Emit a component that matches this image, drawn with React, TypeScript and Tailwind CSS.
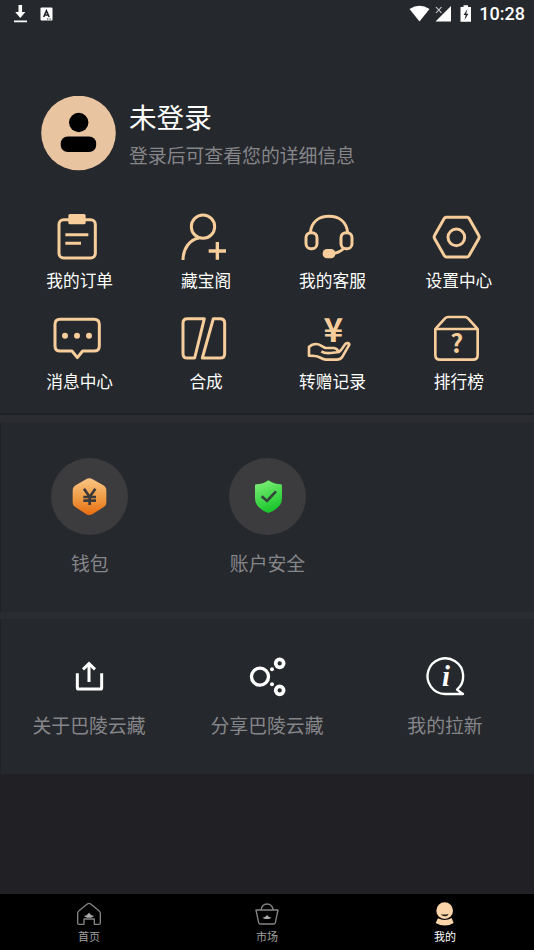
import React from "react";

const GOLD = "#f6cd9b";

type Item = { label: string; icon: React.ReactNode };

function GridIcon({ box, children }: { box: string; children: React.ReactNode }) {
  return (
    <svg className="h-[54px] w-[60px] overflow-visible" viewBox={box} fill="none" stroke={GOLD} strokeWidth={9} strokeLinejoin="round">
      {children}
    </svg>
  );
}

const menu: Item[] = [
  {
    label: "我的订单",
    icon: (
      <GridIcon box="59 15 180 162">
        <rect x="86" y="44" width="109" height="115" rx="14" />
        <rect x="114" y="27" width="52" height="31" rx="5" fill={GOLD} stroke="none" />
        <path d="M105 89h69M105 115h47" />
      </GridIcon>
    ),
  },
  {
    label: "藏宝阁",
    icon: (
      <GridIcon box="438 15 180 162">
        <circle cx="519" cy="65" r="35" />
        <path d="M507 99C480 104 460 128 459 165" />
        <path d="M536 138h52M562 111v53" strokeWidth="10" />
      </GridIcon>
    ),
  },
  {
    label: "我的客服",
    icon: (
      <GridIcon box="37 15 180 162">
        <path d="M62 82C66 50 88 34 118 34s52 16 56 48M162 130c-6 8-14 11-28 15" />
        <rect x="49" y="83" width="33" height="48" rx="15" />
        <rect x="154" y="83" width="33" height="48" rx="15" />
        <rect x="99" y="132" width="38" height="28" rx="13" fill={GOLD} stroke="none" />
      </GridIcon>
    ),
  },
  {
    label: "设置中心",
    icon: (
      <GridIcon box="416 15 180 162">
        <path d="M467 37h64q3 0 5 3l29 51q3 5 0 10l-29 51q-2 4-5 4h-64q-3 0-5-4l-29-51q-3-5 0-10l29-51q2-3 5-3Z" />
        <circle cx="498" cy="97" r="25" />
      </GridIcon>
    ),
  },
  {
    label: "消息中心",
    icon: (
      <GridIcon box="59 18 180 162">
        <path d="M89 43h102q16 0 16 15v64q0 16-16 16h-34l-16 20-16-20H89q-15 0-15-16V58q0-15 15-15Z" />
        <g fill={GOLD} stroke="none">
          <circle cx="104" cy="92" r="9" />
          <circle cx="140" cy="92" r="9" />
          <circle cx="176" cy="92" r="9" />
        </g>
      </GridIcon>
    ),
  },
  {
    label: "合成",
    icon: (
      <GridIcon box="438 18 180 162">
        <path d="M472 41h51l-29 118h-22q-13 0-13-13V54q0-13 13-13ZM550 41h20q14 0 14 13v92q0 13-14 13h-53Z" />
      </GridIcon>
    ),
  },
  {
    label: "转赠记录",
    icon: (
      <GridIcon box="37 18 180 162">
        <text x="131" y="110" textAnchor="middle" fill={GOLD} stroke="none" fontSize="100" fontWeight="700">¥</text>
        <path d="M95 139q10 7 28 5l25-3C160 132 163 118 170 115q9-2 9 4l-22 38q-5 7-16 7H109c-14-1-20-11-33-11l-18-1V126q8-9 22-9 8 0 18 7l9 5h26q12 2 12 12" strokeWidth="8" />
      </GridIcon>
    ),
  },
  {
    label: "排行榜",
    icon: (
      <GridIcon box="416 18 180 162">
        <path d="M435 72h127v78q0 14-14 14h-99q-14 0-14-14ZM436 71l28-31q4-4 9-4h51q5 0 9 4l28 31" strokeWidth="8" />
        <text x="499" y="144" textAnchor="middle" fill={GOLD} stroke="none" fontSize="76" fontWeight="700">?</text>
      </GridIcon>
    ),
  },
];

const assets: Item[] = [
  {
    label: "钱包",
    icon: (
      <svg className="size-[77px]" viewBox="0 0 231 231">
        <defs>
          <linearGradient id="wallet" x1="0" y1="0" x2="0" y2="1">
            <stop stopColor="#fac584" />
            <stop offset=".55" stopColor="#ee9a43" />
            <stop offset="1" stopColor="#ea6c10" />
          </linearGradient>
        </defs>
        <path d="M105 64q10-6 20 0l32 18q9 5 9 16v34q0 11-9 16l-32 20q-10 6-20 0l-31-20q-9-5-9-16v-34q0-11 9-16Z" fill="url(#wallet)" />
        <path d="M99 92l17 25 17-25M116 117v24M97 117h38M97 128h38" fill="none" stroke="#3b3a3b" strokeWidth="8" />
      </svg>
    ),
  },
  {
    label: "账户安全",
    icon: (
      <svg className="size-[77px]" viewBox="0 0 231 231">
        <defs>
          <linearGradient id="shield" x1="0" y1="0" x2=".35" y2="1">
            <stop stopColor="#85f27b" />
            <stop offset="1" stopColor="#1cc72e" />
          </linearGradient>
        </defs>
        <path d="M118 67q18 12 37 12q4 0 4 4v38q0 29-41 44q-40-15-40-44V83q0-4 4-4q20 0 36-12Z" fill="url(#shield)" />
        <path d="M98 115l16 14 27-29" fill="none" stroke="#34443a" strokeWidth="8" />
      </svg>
    ),
  },
];

const links: Item[] = [
  {
    label: "关于巴陵云藏",
    icon: (
      <svg className="size-[42px]" viewBox="204 47 126 126" fill="none" stroke="#fff" strokeWidth="9">
        <path d="M232 99v43q0 4 4 4h65q4 0 4-4V99M267 125V72" />
        <path d="M249 87l18-17 18 17" />
      </svg>
    ),
  },
  {
    label: "分享巴陵云藏",
    icon: (
      <svg className="size-[42px]" viewBox="48 47 126 126" fill="none" stroke="#fff">
        <circle cx="90" cy="109" r="25.500" strokeWidth="10" />
        <circle cx="149" cy="69" r="12" strokeWidth="11" />
        <circle cx="149" cy="150" r="12" strokeWidth="11" />
        <g fill="#fff" stroke="none">
          <circle cx="126" cy="87" r="6" />
          <circle cx="126" cy="132" r="6" />
        </g>
      </svg>
    ),
  },
  {
    label: "我的拉新",
    icon: (
      <svg className="size-[42px] overflow-visible" viewBox="582 47 126 126" fill="none" stroke="#fff" strokeWidth="7" strokeLinejoin="round">
        <path d="M699 161h-54a53.500 53.500 0 1 1 36-13Z" />
        <text x="648" y="137" textAnchor="middle" fill="#fff" stroke="none" fontSize="86" fontStyle="italic" fontWeight="700" style={{ fontFamily: '"Liberation Serif", serif' }}>i</text>
      </svg>
    ),
  },
];

function StatusBar() {
  return (
    <div className="flex h-7 items-center justify-between pr-[9px] pl-[13px]">
      <div className="flex items-center gap-3">
        <svg className="h-[18px] w-[15px]" viewBox="0 0 15 18" fill="#fff">
          <path d="M5.500 0h3.600v7h3.300l-5.100 6-5.100-6h3.300ZM1 15.500h13v1.800H1Z" />
        </svg>
        <svg className="h-[14px] w-[13px]" viewBox="0 0 13 14">
          <rect x=".5" y=".5" width="12" height="13" rx="1" fill="#fff" />
          <path d="M3.700 10L6.400 3.800 9.200 10M4.600 8h3.800" fill="none" stroke="#25282c" strokeWidth="1.600" />
          <path d="M7 12h4" stroke="#25282c" strokeDasharray="1 .6" />
        </svg>
      </div>
      <div className="flex items-center">
        <svg className="h-[18px] w-[64px]" viewBox="409 4 64 18" fill="#fff">
          <path d="M409.500 8Q419.500 1.500 429.500 8L419.500 20.500Z" />
          <path d="M451 5v15.500H435.500Z" />
          <path d="M436 6l5.500 6M441.500 6l-5.500 6" stroke="#d8d8d8" strokeWidth="1.100" />
          <path d="M463.500 4.200h4.500V6h3v14.800H460.500V6h3Z" />
          <path d="M467.500 8l-4 6h2.200l-1.200 5 4-6.300h-2.300Z" fill="#25282c" />
        </svg>
        <span className="ml-[6px] font-['Roboto'] text-[18px] leading-7 font-medium text-white">10:28</span>
      </div>
    </div>
  );
}

function NavItem({ label, active, children }: { label: string; active?: boolean; children: React.ReactNode }) {
  return (
    <div className="flex flex-col items-center pt-[7px]">
      <svg className="h-[26px] w-[28px]" viewBox="0 0 84 78" fill="none" stroke="#858585" strokeWidth="4" strokeLinejoin="round">
        {children}
      </svg>
      <span className={active ? "mt-px text-[11px] leading-4 text-white" : "mt-px text-[11px] leading-4 text-[#a0a0a0]"}>{label}</span>
    </div>
  );
}

export default function App() {
  return (
    <div className="flex h-[950px] w-[534px] flex-col overflow-hidden bg-[#212024] font-['Noto_Sans_CJK_SC',sans-serif]">
      <header className="h-[413px] bg-[#25282c]">
        <StatusBar />
        <div className="mt-[68px] flex h-[75px] pl-[41px]">
          <svg className="size-[75px]" viewBox="0 0 75 75">
            <circle cx="37.500" cy="37" r="37.300" fill="#e9c4a0" />
            <circle cx="37.700" cy="26.500" r="9.700" />
            <rect x="19.700" y="40.500" width="35.500" height="15.500" rx="7" />
          </svg>
          <div className="-mt-px ml-[13px]">
            <h1 className="text-[27.600px] leading-[42px] font-normal text-white">未登录</h1>
            <p className="mt-1 text-[18.850px] leading-7 text-[#85868a]">登录后可查看您的详细信息</p>
          </div>
        </div>
        <div className="mt-[39px] ml-[16.500px] grid w-[505.600px] grid-cols-4 gap-y-[19px]">
          {menu.map((m) => (
            <div key={m.label} className="flex flex-col items-center">
              {m.icon}
              <span className="mt-1 text-[16.700px] leading-6 text-white">{m.label}</span>
            </div>
          ))}
        </div>
      </header>
      <div className="h-[9px] border-t-2 border-[#202124] bg-[#2b2c31]" />
      <section className="grid h-[190px] grid-cols-3 border-l border-[#212226] bg-[#25282c] pt-[36px]">
        {assets.map((a) => (
          <div key={a.label} className="flex flex-col items-center">
            <div className="size-[77px] rounded-full bg-[#3c3c3f]">{a.icon}</div>
            <span className="mt-[14px] text-[18.850px] leading-7 text-[#85868a]">{a.label}</span>
          </div>
        ))}
      </section>
      <div className="h-[7px] bg-[#2b2c31]" />
      <section className="grid h-[155px] grid-cols-3 bg-[#25282c] pt-[37px] shadow-[inset_1px_0_#212226]">
        {links.map((l) => (
          <div key={l.label} className="flex flex-col items-center">
            {l.icon}
            <span className="mt-[13px] text-[18.850px] leading-7 text-[#85868a]">{l.label}</span>
          </div>
        ))}
      </section>
      <nav className="mt-auto grid h-[56px] grid-cols-3 bg-black">
        <NavItem label="首页">
          <path d="M27 70H12q-4 0-4-4V37q0-5 4-8l25-20q5-4 10 0l25 20q4 3 4 8v29q0 4-4 4H58V54H27Z" />
          <path d="M26 45l9-2 7-8 7 8 9 2-10 5H36Z" fill="#aaa" stroke="none" />
        </NavItem>
        <NavItem label="市场">
          <path d="M10 27h65l-8 38q-1 4-5 4H22q-4 0-5-4L9 27ZM24 27q3-18 18-18t19 18" />
          <path d="M28 50l8-2 6-6 6 6 8 2-8 4H36Z" fill="#aaa" stroke="none" />
        </NavItem>
        <NavItem label="我的" active>
          <circle cx="41" cy="29" r="25" fill="#fbd4aa" stroke="none" />
          <path d="M29 39q12 4 24-1q-3 8-11 8t-13-7Z" fill="#241b13" stroke="none" />
          <path d="M21 52q20 11 41-1l6 15q-26 15-54 0Z" fill="#fbd4aa" stroke="none" />
        </NavItem>
      </nav>
    </div>
  );
}
